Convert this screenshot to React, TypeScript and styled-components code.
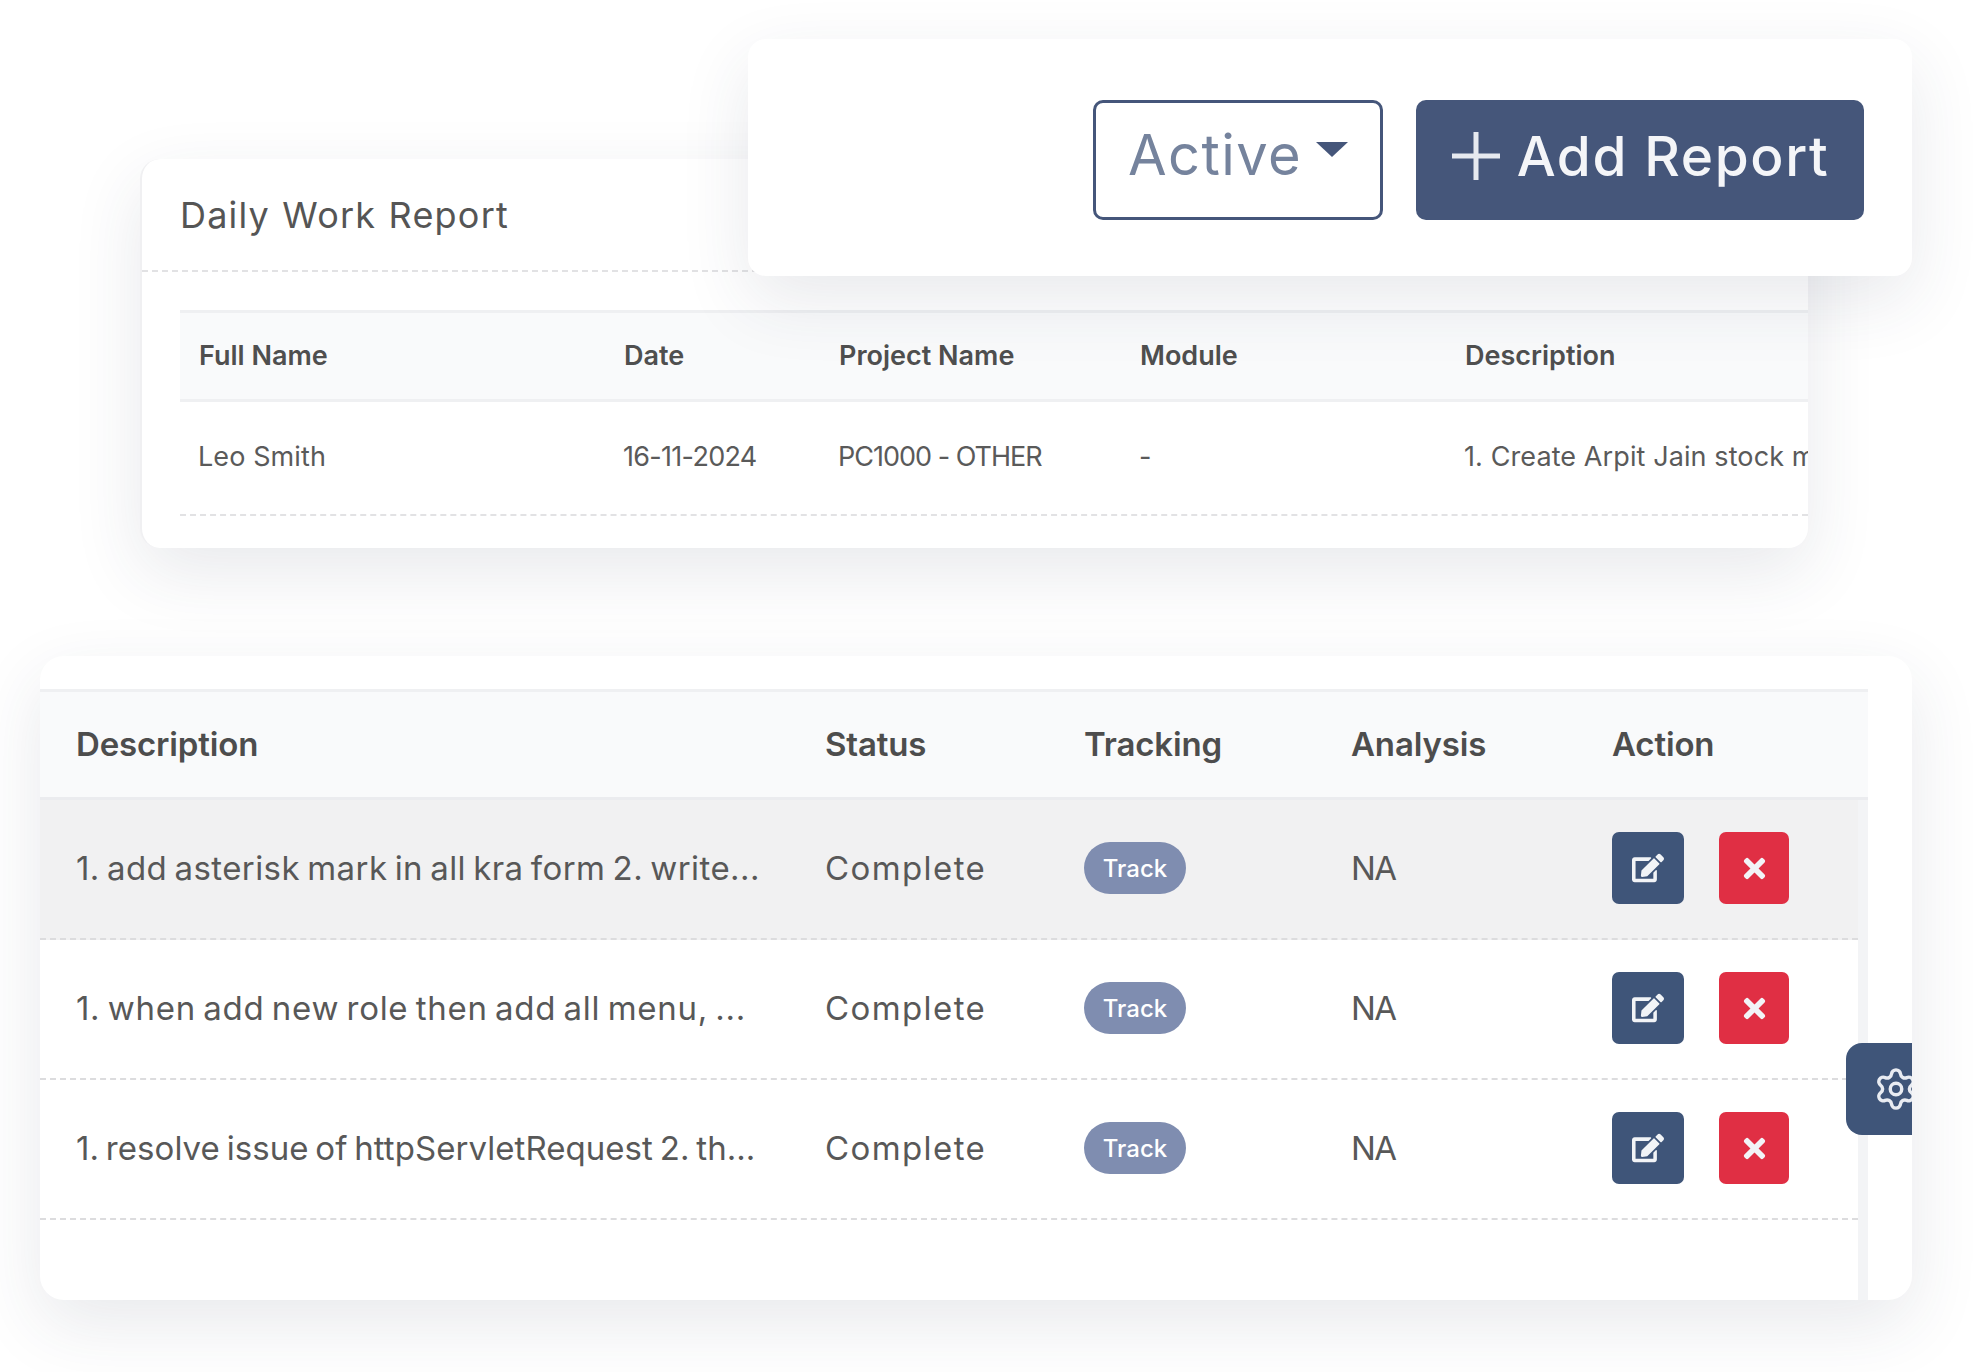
import React from 'react';
import styled, { createGlobalStyle } from 'styled-components';
import { FaEdit, FaTimes } from 'react-icons/fa';
import { Settings } from 'lucide-react';

const GlobalStyle = createGlobalStyle`
  html, body {
    margin: 0;
    padding: 0;
    background: #ffffff;
    font-family: Inter, "Noto Sans", sans-serif;
    color: #555555;
  }
  * {
    box-sizing: border-box;
  }
`;

const cardShadow = '0 24px 70px rgba(45, 55, 85, 0.11)';

const Page = styled.div`
  position: relative;
  width: 1984px;
  height: 1372px;
  padding: 159px 72px 0 40px;
  overflow: hidden;
`;

const ToolbarCard = styled.div`
  position: absolute;
  left: 748px;
  top: 39px;
  width: 1164px;
  height: 237px;
  z-index: 2;
  display: flex;
  justify-content: flex-end;
  gap: 33px;
  padding: 61px 48px 0 0;
  background: #ffffff;
  border-radius: 18px;
  box-shadow: ${cardShadow};
`;

const FilterButton = styled.button`
  width: 290px;
  height: 120px;
  display: flex;
  align-items: center;
  justify-content: center;
  gap: 14px;
  padding: 0 0 10px;
  background: #ffffff;
  border: 3px solid #45567a;
  border-radius: 10px;
  color: #75839d;
  font-family: inherit;
  font-size: 56px;
  font-weight: 400;
  letter-spacing: 1.4px;
`;

const Caret = styled.span`
  width: 0;
  height: 0;
  margin-bottom: 12px;
  border-left: 16px solid transparent;
  border-right: 16px solid transparent;
  border-top: 15px solid #45567a;
`;

const AddButton = styled.button`
  width: 448px;
  height: 120px;
  display: flex;
  align-items: center;
  justify-content: center;
  gap: 16px;
  padding: 0 0 8px;
  background: #45567a;
  border: none;
  border-radius: 10px;
  color: #f4f5f8;
  font-family: inherit;
  font-size: 55px;
  font-weight: 500;
  letter-spacing: 1.6px;
`;

const ReportCard = styled.section`
  width: 1668px;
  height: 389px;
  margin-left: 100px;
  background: #ffffff;
  border-left: 2px solid #f0f0f2;
  border-radius: 20px;
  overflow: hidden;
  box-shadow: ${cardShadow};
`;

const ReportHeader = styled.div`
  height: 113px;
  display: flex;
  align-items: center;
  padding-left: 38px;
  border-bottom: 2px dashed #e2e2e4;
`;

const ReportTitle = styled.h2`
  margin: 0;
  color: #555555;
  font-size: 36px;
  font-weight: 400;
  letter-spacing: 1.2px;
  word-spacing: 1px;
`;

const ReportTable = styled.div`
  margin: 38px 0 0 38px;
`;

const ReportRow = styled.div<{ $head?: boolean }>`
  display: grid;
  grid-template-columns: 425px 215px 301px 325px 400px;
  align-items: center;
  height: ${(p) => (p.$head ? '92px' : '114px')};
  background: ${(p) => (p.$head ? '#f9fafb' : '#ffffff')};
  border-top: ${(p) => (p.$head ? '3px solid #eff0f2' : 'none')};
  border-bottom: ${(p) => (p.$head ? '3px solid #eff0f2' : '2px dashed #e2e2e4')};
`;

const ReportHeadCell = styled.div`
  padding: 0 0 2px 19px;
  white-space: nowrap;
  color: #4f4f4f;
  font-size: 27px;
  font-weight: 600;
  letter-spacing: 0;
`;

const ReportCell = styled.div<{ $tracking?: string }>`
  padding: 0 0 3px 18px;
  white-space: nowrap;
  color: #5a5a5a;
  font-size: 27px;
  letter-spacing: ${(p) => p.$tracking || '0.1px'};
`;

const TaskCard = styled.section`
  position: relative;
  display: flex;
  flex-direction: column;
  width: 1872px;
  height: 644px;
  margin-top: 108px;
  padding-top: 33px;
  background: #ffffff;
  border-radius: 24px;
  overflow: hidden;
  box-shadow: ${cardShadow};
`;

const taskColumns = '749px 259px 267px 261px 1fr';

const TaskHead = styled.div`
  display: grid;
  grid-template-columns: ${taskColumns};
  align-items: center;
  width: 1828px;
  height: 111px;
  background: #f9fafb;
  border-top: 3px solid #eff0f2;
  border-bottom: 3px solid #ebecef;
`;

const TaskHeadCell = styled.div`
  padding: 0 0 2px 36px;
  color: #4d4d4d;
  font-size: 33px;
  font-weight: 600;
  letter-spacing: -0.15px;
`;

const TaskBody = styled.div`
  flex: 1;
  width: 1828px;
  border-right: 10px solid #f3f4f6;
`;

const TaskRow = styled.div<{ $active?: boolean }>`
  display: grid;
  grid-template-columns: ${taskColumns};
  align-items: center;
  height: 140px;
  background: ${(p) => (p.$active ? '#f1f1f2' : '#ffffff')};
  border-bottom: 2px dashed #dcdcde;
`;

const TaskCell = styled.div`
  display: flex;
  align-items: center;
  padding: 0 0 2px 36px;
  white-space: nowrap;
  color: #585858;
  font-size: 33px;
`;

const TaskText = styled.span<{ $tracking: string }>`
  letter-spacing: ${(p) => p.$tracking};
  word-spacing: -2.5px;
`;

const TaskStatus = styled.span`
  letter-spacing: 1.4px;
`;

const TaskCode = styled.span`
  letter-spacing: -1.5px;
`;

const TrackPill = styled.span`
  display: inline-flex;
  align-items: center;
  justify-content: center;
  width: 102px;
  height: 52px;
  background: #7f8db0;
  border-radius: 26px;
  color: #ffffff;
  font-size: 24px;
  font-weight: 500;
`;

const ActionButton = styled.button<{ $danger?: boolean }>`
  display: flex;
  align-items: center;
  justify-content: center;
  width: ${(p) => (p.$danger ? '70px' : '72px')};
  height: 72px;
  margin-right: ${(p) => (p.$danger ? '0' : '35px')};
  padding: 0;
  background: ${(p) => (p.$danger ? '#e02f44' : '#3f5579')};
  border: none;
  border-radius: 7px;
  color: #f2f4f7;
  font-size: ${(p) => (p.$danger ? '31px' : '32px')};
`;

const SettingsTab = styled.div`
  position: absolute;
  left: 1806px;
  top: 387px;
  display: flex;
  align-items: center;
  width: 100px;
  height: 92px;
  padding-left: 27px;
  background: #3f5579;
  border-radius: 16px 0 0 16px;
  color: #e9ecf2;
`;

const reportHead = ['Full Name', 'Date', 'Project Name', 'Module', 'Description'];
const taskHead = ['Description', 'Status', 'Tracking', 'Analysis', 'Action'];
const tasks = [
  { text: '1. add asterisk mark in all kra form 2. write...', tracking: '0.43px' },
  { text: '1. when add new role then add all menu, ...', tracking: '0.7px' },
  { text: '1. resolve issue of httpServletRequest 2. th...', tracking: '0.05px' },
];

export default function App() {
  return (
    <Page>
      <GlobalStyle />
      <ToolbarCard>
        <FilterButton>
          Active
          <Caret />
        </FilterButton>
        <AddButton>
          <svg width="50" height="50" viewBox="0 0 50 50">
            <path d="M25 1V49M1 25H49" stroke="#e6e9ef" strokeWidth="5" fill="none" />
          </svg>
          Add Report
        </AddButton>
      </ToolbarCard>

      <ReportCard>
        <ReportHeader>
          <ReportTitle>Daily Work Report</ReportTitle>
        </ReportHeader>
        <ReportTable>
          <ReportRow $head>
            {reportHead.map((label) => (
              <ReportHeadCell key={label}>{label}</ReportHeadCell>
            ))}
          </ReportRow>
          <ReportRow>
            <ReportCell>Leo Smith</ReportCell>
            <ReportCell $tracking="-0.7px">16-11-2024</ReportCell>
            <ReportCell $tracking="-1px">PC1000 - OTHER</ReportCell>
            <ReportCell>-</ReportCell>
            <ReportCell>1. Create Arpit Jain stock market module</ReportCell>
          </ReportRow>
        </ReportTable>
      </ReportCard>

      <TaskCard>
        <TaskHead>
          {taskHead.map((label) => (
            <TaskHeadCell key={label}>{label}</TaskHeadCell>
          ))}
        </TaskHead>
        <TaskBody>
          {tasks.map((task, index) => (
            <TaskRow $active={index === 0} key={task.text}>
              <TaskCell>
                <TaskText $tracking={task.tracking}>{task.text}</TaskText>
              </TaskCell>
              <TaskCell>
                <TaskStatus>Complete</TaskStatus>
              </TaskCell>
              <TaskCell>
                <TrackPill>Track</TrackPill>
              </TaskCell>
              <TaskCell>
                <TaskCode>NA</TaskCode>
              </TaskCell>
              <TaskCell>
                <ActionButton>
                  <FaEdit />
                </ActionButton>
                <ActionButton $danger>
                  <FaTimes />
                </ActionButton>
              </TaskCell>
            </TaskRow>
          ))}
        </TaskBody>
        <SettingsTab>
          <Settings size={46} strokeWidth={1.8} />
        </SettingsTab>
      </TaskCard>
    </Page>
  );
}
